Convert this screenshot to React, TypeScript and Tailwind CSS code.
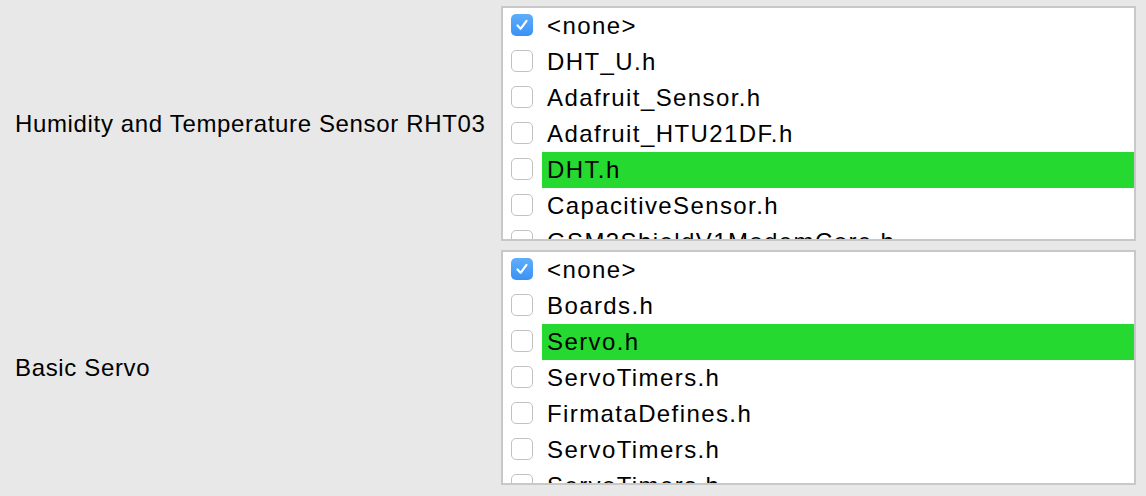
import React from "react";

type Item = { label: string; checked?: boolean; highlight?: boolean };

const box1: Item[] = [
  { label: "<none>", checked: true },
  { label: "DHT_U.h" },
  { label: "Adafruit_Sensor.h" },
  { label: "Adafruit_HTU21DF.h" },
  { label: "DHT.h", highlight: true },
  { label: "CapacitiveSensor.h" },
  { label: "GSM3ShieldV1ModemCore.h" },
];

const box2: Item[] = [
  { label: "<none>", checked: true },
  { label: "Boards.h" },
  { label: "Servo.h", highlight: true },
  { label: "ServoTimers.h" },
  { label: "FirmataDefines.h" },
  { label: "ServoTimers.h" },
  { label: "ServoTimers.h" },
];

function Check({ checked }: { checked?: boolean }) {
  if (checked) {
    return (
      <div className="w-[22px] h-[22px] rounded-[5px] bg-gradient-to-b from-[#5eaefb] to-[#3a92f5] flex items-center justify-center shrink-0">
        <svg width="14" height="14" viewBox="0 0 14 14">
          <path d="M2.5 7.5 L5.6 10.8 L11.5 2.8" fill="none" stroke="white" strokeWidth="2.2" strokeLinecap="round" strokeLinejoin="round" />
        </svg>
      </div>
    );
  }
  return <div className="w-[22px] h-[22px] rounded-[5px] bg-white border border-[#c2c2c2] shrink-0" />;
}

function ListBox({ items }: { items: Item[] }) {
  return (
    <div className="w-[635px] h-[235px] bg-white border-2 border-[#c8c8c8] overflow-hidden">
      {items.map((it, i) => (
        <div key={i} className="h-[36px] flex items-center pl-[8px]">
          <div className="-mt-[2px]">
            <Check checked={it.checked} />
          </div>
          <div
            className={
              "ml-[9px] h-[36px] flex-1 flex items-center pl-[5px] " +
              (it.highlight ? "bg-[#25d930]" : "")
            }
          >
            <span className="text-[24px] tracking-[1.4px] text-black leading-[36px] whitespace-nowrap">{it.label}</span>
          </div>
        </div>
      ))}
    </div>
  );
}

export default function App() {
  return (
    <div
      className="w-[1146px] h-[496px] bg-[#e8e8e8] pt-[6px] flex flex-col gap-[9px]"
      style={{ fontFamily: '"Liberation Sans", Arial, sans-serif' }}
    >
      <div className="flex items-center">
        <div className="w-[501px] pl-[15px] text-[24px] tracking-[0.65px] text-black whitespace-nowrap">Humidity and Temperature Sensor RHT03</div>
        <ListBox items={box1} />
      </div>
      <div className="flex items-center">
        <div className="w-[501px] pl-[15px] text-[24px] tracking-[0.65px] text-black whitespace-nowrap">Basic Servo</div>
        <ListBox items={box2} />
      </div>
    </div>
  );
}
